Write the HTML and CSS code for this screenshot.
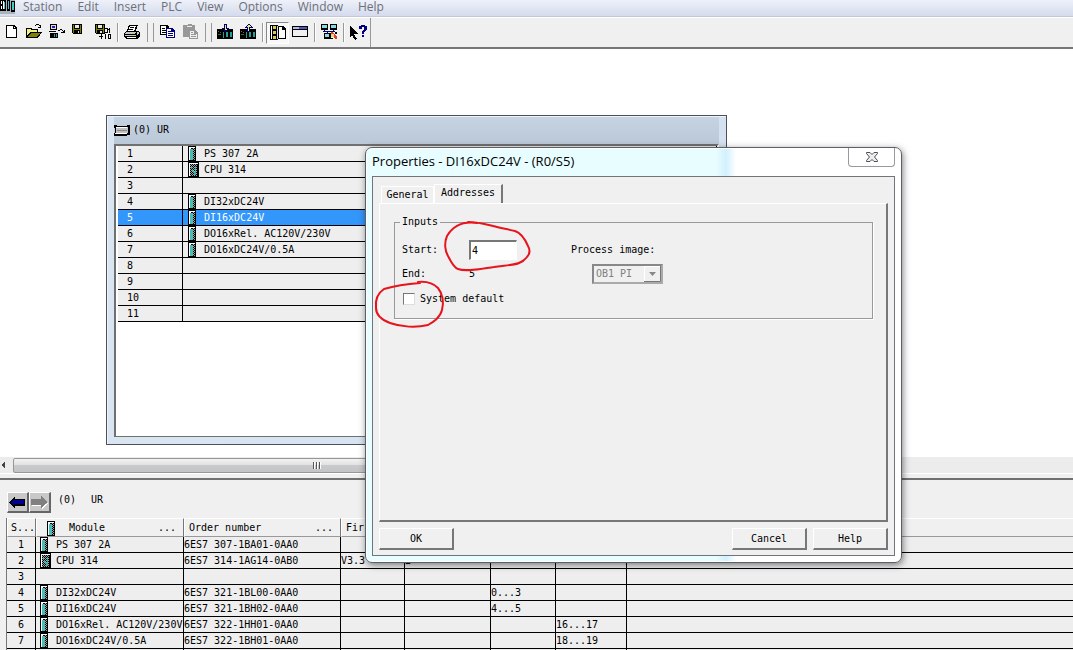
FILE: index.html
```html
<!DOCTYPE html>
<html lang="en">

<head>
    <meta charset="UTF-8">
    <meta name="viewport" content="width=device-width, initial-scale=1.0">
    <title>HW Config</title>
    <link rel="stylesheet" href="styles.css">
</head>

<body>
    <svg class="defs" width="0" height="0" aria-hidden="true">
        <defs>
            <pattern id="hatch" width="2" height="2" patternUnits="userSpaceOnUse">
                <path fill="#a0a8a8" d="M0 0h2v2h-2z" />
                <path d="M0 0h1v1h-1zM1 1h1v1h-1z" />
            </pattern>
            <symbol id="module" viewBox="0 0 11 15">
                <path d="M0 0h8v15h-8z" />
                <path fill="#fff" d="M1 1h6v1h-6zM1 1h2v13h-2z" />
                <path fill="#48bcb8" d="M2 3h3v11h-3z" />
                <path fill="url(#hatch)" d="M5 2h2v12h-2z" />
            </symbol>
            <symbol id="cpu" viewBox="0 0 11 15">
                <path d="M0 0h11v15h-11z" />
                <path fill="#fff" d="M1 1h9v1h-9zM1 1h1v13h-1z" />
                <path fill="url(#hatch)" d="M2 2h7v12h-7z" />
                <path fill="#30b0a8" d="M3 5h1v2h1v2h1v1h1v-6h1v9h-2v-2h-1v-2h-1v-2h-1z" />
            </symbol>
            <symbol id="rackmods" viewBox="0 0 17 17">
                <path d="M0 5h16v10h-16z" />
                <path fill="#20a098" d="M6 8h1v6h-1zM9 8h2v5h-2zM13 8h2v5h-2z" />
                <path fill="#d03030" d="M1 7h1v1h-1zM3 8h1v1h-1z" />
                <path fill="#208020" d="M1 10h3v1h-3z" />
            </symbol>
        </defs>
    </svg>

    <div class="app">
        <nav class="menu">
            <svg class="logo" width="15" height="14" viewBox="0 0 15 14">
                <path fill="#a8b4bc" d="M0 0h15v14h-15z" />
                <path d="M0 0h6v11h-6zM7 0h3v11h-3zM11 1h4v11h-4z" />
                <path fill="#fff" d="M1 1h1v3h-1zM1 6h1v3h-1zM3 1h1v8h-1z" />
                <path fill="#48c8c8" d="M4 2h1v7h-1zM8 1h1v8h-1zM12 2h2v8h-2z" />
            </svg>
            <button>Station</button>
            <button>Edit</button>
            <button>Insert</button>
            <button>PLC</button>
            <button>View</button>
            <button>Options</button>
            <button>Window</button>
            <button>Help</button>
        </nav>

        <div class="toolbar">
            <div class="tools">
                <button aria-label="New">
                    <svg viewBox="0 0 17 17"><path d="M3 1h8l3 3v10h-11z" /><path fill="#fff" d="M4 2h6v3h3v8h-9zM11 3h1v1h-1z" /></svg>
                </button>
                <button aria-label="Open">
                    <svg viewBox="0 0 17 17"><path d="M0 4h5l1 1h6v3h4l-4 6h-12z" /><path fill="#f0f080" d="M1 5h3l1 1h6v2h-7l-3 4z" /><path fill="#808000" d="M5 9h9l-3 4h-9z" /><path fill="none" stroke="#000" d="M9 1.500h1M10 .5h3M13 1.500h1M14.500 1v3M12 3.500h3" /></svg>
                </button>
                <button aria-label="Open online">
                    <svg viewBox="0 0 17 17"><path d="M1 0h7v6h-7zM0 7h7v1h-7zM1 9h8v5h-8z" /><path fill="#ddd" d="M2 1h5v4h-5z" /><path fill="#2020c0" d="M3 2h3v2h-3z" /><path fill="#30a8a0" d="M5 10h1v3h-1zM7 10h1v3h-1z" /><path fill="none" stroke="#000" d="M9 6.500h2M11 5.500h2M13 6.500h1M14 7.500h1M15.500 6v3M12 8.500h4" /></svg>
                </button>
                <button aria-label="Save">
                    <svg viewBox="0 0 17 17"><path d="M0 0h10v10h-9l-1-1z" /><path fill="#808000" d="M1 1h1v4h6v-4h1v8h-8z" /><path fill="#e8e8e8" d="M3 1h4v3h-4z" /><path d="M2 6h6v3h-6z" /><path fill="#ddd" d="M6 7h1v2h-1z" /></svg>
                </button>
                <button aria-label="Save and compile">
                    <svg viewBox="0 0 17 17"><path d="M0 0h10v10h-9l-1-1z" /><path fill="#808000" d="M1 1h1v4h6v-4h1v8h-8z" /><path fill="#e8e8e8" d="M3 1h4v3h-4z" /><path d="M2 6h6v3h-6z" /><path fill="#ddd" d="M5 7h2v2h-2z" /><path fill="none" stroke="#000" d="M9.500 4.500h3v4h-3zM14.500 4v5M13 5.500h1M10.500 10v5M13.500 10.500h2v4h-2zM4 12.500h4M6.500 10v5" /></svg>
                </button>
                <i class="sep"></i>
                <button aria-label="Print">
                    <svg viewBox="0 0 17 17"><path d="M5 1h9l-2 6h3l1 2v3l-3 3h-11l-2-2v-4l3-3z" /><path fill="#fff" d="M6 2h6l-2 5h-6z" /><path stroke="#000" d="M6 3.500h4M5 5.500h4" /><path fill="#c8c8c8" d="M2 8h10l-1 2h-10zM1 11h11v1h-11zM13 8h2v1l-1 2h-1z" /><path fill="#fff" d="M3 13h9v1h-9z" /><path fill="#d8d830" d="M8 11h3v1h-3z" /></svg>
                </button>
                <i class="sep wide"></i>
                <button aria-label="Copy">
                    <svg viewBox="0 0 17 17"><path d="M1 1h7l2 2v8h-9z" /><path fill="#fff" d="M2 2h5v2h2v6h-7z" /><path stroke="#000" d="M3 4.500h3M3 6.500h5M3 8.500h5" /><path fill="#000080" d="M7 4h6l3 3v7h-9z" /><path fill="#fff" d="M8 5h4v3h3v5h-7z" /><path stroke="#000080" d="M9 7.500h3M9 9.500h5M9 11.500h5" /></svg>
                </button>
                <button aria-label="Paste" disabled>
                    <svg viewBox="0 0 17 17"><path fill="#989898" d="M1 1h4l1-1h3l1 1h3v12h-12z" /><path fill="#eee" d="M5 2h5v1h-5z" /><path fill="#989898" d="M7 6h6l3 3v6h-9z" /><path fill="#eee" d="M8 7h4v3h3v4h-7z" /><path stroke="#989898" d="M9 8.500h2M9 10.500h5M9 12.500h5" /></svg>
                </button>
                <i class="sep wide"></i>
                <button aria-label="Download">
                    <svg viewBox="0 0 17 17"><use href="#rackmods" width="17" height="17" /><path fill="#000080" d="M7 0h3v4h2l-3 4h-1l-3-4h2z" /><path fill="#f0f060" d="M8 1h1v4h1l-1 1h-1l-1-1h1z" /></svg>
                </button>
                <button aria-label="Upload">
                    <svg viewBox="0 0 17 17"><use href="#rackmods" width="17" height="17" /><path fill="#000080" d="M8 0h1l4 4h-3v4h-3v-4h-3z" /><path fill="#f0f060" d="M8 1h1l2 2h-2v4h-1v-4h-2z" /></svg>
                </button>
                <i class="sep"></i>
                <button class="pressed" aria-label="Catalog">
                    <svg viewBox="0 0 17 17"><path d="M1 1h8v15h-8zM9 2h5l3 3v10h-8z" /><path fill="#fff" d="M2 2h1v13h-1zM10 3h3v3h3v8h-6z" /><path fill="#d8c850" d="M4 2h3v3h-3zM4 7h3v3h-3zM4 12h3v3h-3z" /><path fill="#ddd" d="M8 2h1v13h-1z" /></svg>
                </button>
                <button aria-label="Station window">
                    <svg viewBox="0 0 17 17"><path d="M0 2h16v11h-16z" /><path fill="#f0f0f0" d="M1 6h14v6h-14z" /><path fill="#5058b8" d="M1 3h14v2h-14z" /><path fill="#b8b8e8" d="M1 3h6v2h-6z" /></svg>
                </button>
                <i class="sep"></i>
                <button aria-label="Network">
                    <svg viewBox="0 0 17 17"><path d="M0 0h7v6h-7zM9 0h7v6h-7zM3 9h7v6h-7z" /><path fill="#88dcdc" d="M1 1h5v3h-5zM10 1h5v3h-5zM4 10h4v3h-4z" /><path stroke="#000080" d="M2 7.500h12M3.500 6v2M12.500 6v2M6.500 8v2" /><path fill="#d84020" d="M10 8h2l4 5v2h-2l-4-4z" /><path fill="#f0d080" d="M10 10h3v3h-3z" /><path d="M14 8h2v2h-2zM9 14h3v1h-3z" /></svg>
                </button>
                <i class="sep"></i>
                <button aria-label="Help pointer">
                    <svg viewBox="0 0 17 17"><path d="M0 2l8 8h-4l3 5-2 1-3-5-2 2z" /><path fill="#000080" d="M9 2h2v-1h4v1h2v4h-1v1h-1v1h-1v2h-2v-3h1v-1h1v-3h-2v2h-3zM12 11h2v2h-2z" /></svg>
                </button>
            </div>
        </div>

        <main class="desk">
            <section class="rack">
                <header class="racktitle">
                    <svg width="16" height="11" viewBox="0 0 16 11">
                        <path d="M0 0h3v1h10v-1h3v10h-3v1h-13v-3h1v-5h-1z" />
                        <path fill="#c0c0c0" d="M2 2h12v6h-12z" /><path fill="#fff" d="M2 2h11v1h-11zM1 8h12v1h-12z" /><path fill="#888" d="M3 5h10v1h-10z" />
                    </svg>
                    <span>(0) UR</span>
                </header>
                <div class="rackbody">
                    <table class="slots">
                        <tr><td>1</td><td><svg class="mod"><use href="#module" /></svg>PS 307 2A</td></tr>
                        <tr><td>2</td><td><svg class="mod"><use href="#cpu" /></svg>CPU 314</td></tr>
                        <tr><td>3</td><td></td></tr>
                        <tr><td>4</td><td><svg class="mod"><use href="#module" /></svg>DI32xDC24V</td></tr>
                        <tr class="on"><td>5</td><td><svg class="mod"><use href="#module" /></svg>DI16xDC24V</td></tr>
                        <tr><td>6</td><td><svg class="mod"><use href="#module" /></svg>DO16xRel. AC120V/230V</td></tr>
                        <tr><td>7</td><td><svg class="mod"><use href="#module" /></svg>DO16xDC24V/0.5A</td></tr>
                        <tr><td>8</td><td></td></tr>
                        <tr><td>9</td><td></td></tr>
                        <tr><td>10</td><td></td></tr>
                        <tr><td>11</td><td></td></tr>
                    </table>
                </div>
            </section>
        </main>

        <div class="scroll">
            <svg width="8" height="8" viewBox="0 0 8 8"><path fill="#444" d="M5 0v8l-4-4z" /></svg>
            <div class="thumb"><i></i><i></i><i></i></div>
        </div>

        <section class="detail">
            <div class="nav">
                <button aria-label="Back">
                    <svg viewBox="0 0 17 13"><path d="M0 6l6-6v3h10v7h-10v3z" /><path fill="#000090" d="M2 6l3-3v1h10v4h-10v2z" /></svg>
                </button>
                <button aria-label="Forward" disabled>
                    <svg viewBox="0 0 17 13"><path fill="#fff" d="M17 7l-6 6v-3h-10v-1h11z" /><path fill="#808080" d="M16 6l-6-6v3h-10v6h10v3z" /></svg>
                </button>
                <span>(0)</span>
                <span>UR</span>
            </div>
            <table class="modules">
                <colgroup>
                    <col class="c-slot"><col class="c-module"><col class="c-order"><col class="c-firm">
                    <col class="c-mpi"><col class="c-in"><col class="c-out"><col>
                </colgroup>
                <tr>
                    <th>S...</th>
                    <th><div class="head"><svg class="mod"><use href="#module" /></svg><span>Module</span><span class="dots">...</span></div></th>
                    <th><div class="head"><span>Order number</span><span class="dots">...</span></div></th>
                    <th>Fir</th><th></th><th></th><th></th><th></th>
                </tr>
                <tr><td>1</td><td><svg class="mod"><use href="#module" /></svg>PS 307 2A</td><td>6ES7 307-1BA01-0AA0</td><td></td><td></td><td></td><td></td><td></td></tr>
                <tr><td>2</td><td><svg class="mod"><use href="#cpu" /></svg>CPU 314</td><td>6ES7 314-1AG14-0AB0</td><td>V3.3</td><td>2</td><td></td><td></td><td></td></tr>
                <tr><td>3</td><td></td><td></td><td></td><td></td><td></td><td></td><td></td></tr>
                <tr><td>4</td><td><svg class="mod"><use href="#module" /></svg>DI32xDC24V</td><td>6ES7 321-1BL00-0AA0</td><td></td><td></td><td>0...3</td><td></td><td></td></tr>
                <tr><td>5</td><td><svg class="mod"><use href="#module" /></svg>DI16xDC24V</td><td>6ES7 321-1BH02-0AA0</td><td></td><td></td><td>4...5</td><td></td><td></td></tr>
                <tr><td>6</td><td><svg class="mod"><use href="#module" /></svg>DO16xRel. AC120V/230V</td><td>6ES7 322-1HH01-0AA0</td><td></td><td></td><td></td><td>16...17</td><td></td></tr>
                <tr><td>7</td><td><svg class="mod"><use href="#module" /></svg>DO16xDC24V/0.5A</td><td>6ES7 322-1BH01-0AA0</td><td></td><td></td><td></td><td>18...19</td><td></td></tr>
                <tr><td></td><td></td><td></td><td></td><td></td><td></td><td></td><td></td></tr>
            </table>
        </section>
    </div>

    <div class="dialog" role="dialog" aria-labelledby="dlgtitle">
        <header class="dlghead">
            <span id="dlgtitle">Properties - DI16xDC24V - (R0/S5)</span>
            <button class="close" aria-label="Close">
                <svg width="12" height="10" viewBox="0 0 12 10"><path fill="#eee" stroke="#4a4e58" d="M.5.5h3.500l2 2 2-2h3.500v1l-3 3.500 3 3.500v1h-3.500l-2-2-2 2h-3.500v-1l3-3.500-3-3.500z" /></svg>
            </button>
        </header>
        <div class="client">
            <div class="tabs">
                <button>General</button>
                <button class="on">Addresses</button>
            </div>
            <div class="panel">
                <fieldset>
                    <legend>Inputs</legend>
                    <div class="fields">
                        <label for="start">Start:</label>
                        <input type="text" id="start" value="4">
                        <label for="image">Process image:</label>
                        <span>End:</span>
                        <span class="end">5</span>
                        <select id="image" disabled>
                            <option>OB1 PI</option>
                        </select>
                    </div>
                    <div class="check">
                        <input type="checkbox" id="sysdef">
                        <label for="sysdef">System default</label>
                    </div>
                </fieldset>
            </div>
            <div class="actions">
                <button class="ok">OK</button>
                <button>Cancel</button>
                <button>Help</button>
            </div>
        </div>
        <svg class="marks" width="170" height="190" viewBox="366 148 170 190" aria-hidden="true">
            <path d="M477 223C463 221 453 226 447 236C444 243 445 251 448 256C451 262 454 268 458 269C466 272 480 269 494 267C505 265 518 266 524 260C529 256 531 251 528 246C525 239 521 233 515 231C507 229 500 228 493 226C485 224 478 222 468 222" />
            <path d="M418 282C427 281 433 283 438 288C443 294 444 303 442 310C440 318 433 322 428 325C416 328 401 327 390 323C382 320 376 316 376 308C375 299 378 293 384 289C394 286 406 284 420 283" />
        </svg>
    </div>
</body>

</html>
```
FILE: styles.css
```css
* {
    box-sizing: border-box;
}

html,
body {
    height: 100%;
    margin: 0;
    overflow: hidden;
}

body {
    position: relative;
    background: #f0f0f0;
    color: #000;
    font: 10px/14px "DejaVu Sans Mono", "Liberation Mono", monospace;
}

button,
input,
select {
    margin: 0;
    padding: 0;
    border: 0;
    border-radius: 0;
    background: none;
    color: inherit;
    font: inherit;
}

svg {
    flex: none;
    shape-rendering: crispEdges;
}

table {
    border-collapse: separate;
    border-spacing: 0;
    table-layout: fixed;
    width: 100%;
}

.defs {
    position: absolute;
}

.app {
    display: flex;
    flex-direction: column;
    height: 100%;
}

/* menu */
.menu {
    display: flex;
    flex: none;
    gap: 15px;
    height: 17px;
    background: linear-gradient(#eef1f9, #d5dbed);
    border-bottom: 1px solid #c3c8d6;
}

.menu .logo {
    margin-right: -7px;
}

.menu button {
    height: 14px;
    color: #6d7078;
    font: 12px/14px "Open Sans", "Noto Sans", sans-serif;
}

/* toolbar */
.toolbar {
    flex: none;
    height: 32px;
    border-top: 1px solid #fff;
    border-bottom: 2px solid #777;
    background: #f0f0f0;
}

.tools {
    display: flex;
    align-items: center;
    width: max-content;
    height: 100%;
    border-right: 1px solid #999;
}

.tools button {
    display: flex;
    align-items: center;
    justify-content: center;
    width: 23px;
    height: 22px;
}

.tools button svg {
    width: 17px;
    height: 17px;
}

.tools .pressed {
    border: 1px solid #888;
    border-right-color: #fff;
    border-bottom-color: #fff;
    background: #f8f8f8;
}

.sep {
    width: 2px;
    height: 19px;
    margin: 0 2px;
    border-left: 1px solid #999;
    border-right: 1px solid #fff;
}

.sep.wide {
    width: 7px;
    margin: 0 2px 0 3px;
    border-right-color: #999;
}

/* station area */
.desk {
    position: relative;
    flex: 1;
    min-height: 0;
    overflow: hidden;
    background: #fff;
}

.rack {
    position: absolute;
    left: 106px;
    top: 66px;
    display: flex;
    flex-direction: column;
    width: 621px;
    height: 330px;
    padding: 0 7px 7px;
    border: 1px solid #4c5058;
    background: linear-gradient(90deg, #dae5f2, #d4e1f0);
    box-shadow: inset 1px 1px #eef4fa;
}

.racktitle {
    display: flex;
    align-items: center;
    gap: 3px;
    height: 27px;
    margin-top: 1px;
    background: linear-gradient(#c6d3e2, #bac8d7);
}

.racktitle span {
    padding-bottom: 1px;
}

.rackbody {
    flex: 1;
    border: 2px solid #707070;
    border-right-color: #fff;
    border-bottom: 1px solid #707070;
    padding-left: 2px;
    background: #fff;
}

.slots td,
.modules td {
    height: 16px;
    padding: 0;
    border-right: 1px solid #000;
    border-bottom: 1px solid #000;
    background: #eee;
    line-height: 15px;
    white-space: nowrap;
}

.slots td:first-child {
    width: 65px;
    padding-left: 9px;
}

.mod {
    width: 11px;
    height: 15px;
    margin: 0 5px 0 4px;
    vertical-align: top;
}

.slots .mod {
    margin-left: 5px;
}

.slots .on td {
    background: #3296fa;
    color: #fff;
}

/* horizontal scrollbar */
.scroll {
    display: flex;
    flex: none;
    align-items: center;
    gap: 5px;
    height: 17px;
    border-bottom: 1px solid #fff;
    background: #ececec;
}

.thumb {
    display: flex;
    align-items: center;
    justify-content: center;
    gap: 1px;
    width: 607px;
    height: 15px;
    border: 1px solid #979797;
    border-radius: 2px;
    background: linear-gradient(#f2f2f2, #e2e2e4 45%, #c9cacc 50%, #c3c4c6);
}

.thumb i {
    width: 2px;
    height: 7px;
    border-left: 1px solid #555;
    border-right: 1px solid #fff;
}

/* module list */
.detail {
    flex: none;
    height: 172px;
    margin-top: 4px;
    padding: 12px 0 0 6px;
    overflow: hidden;
    border-top: 2px solid #707070;
    background: #f0f0f0;
}

.nav {
    display: flex;
    align-items: flex-start;
    height: 26px;
    padding-left: 1px;
}

.nav button {
    display: flex;
    align-items: center;
    justify-content: center;
    width: 22px;
    height: 21px;
    border: 1px solid #fff;
    border-right: 2px solid #666;
    border-bottom: 2px solid #666;
    background: #c8c8c8;
}

.nav button svg {
    width: 17px;
    height: 13px;
}

.nav span {
    margin: 1px 0 0 7px;
}

.nav span + span {
    margin-left: 15px;
}

.modules {
    border-left: 1px solid #777;
}

.c-slot {
    width: 29px;
}

.c-module {
    width: 148px;
}

.c-order {
    width: 157px;
}

.c-firm {
    width: 64px;
}

.c-mpi {
    width: 86px;
}

.c-in {
    width: 65px;
}

.c-out {
    width: 71px;
}

.modules th {
    height: 19px;
    padding: 1px 0 0 4px;
    border-top: 1px solid #fff;
    border-left: 1px solid #fff;
    border-right: 1px solid #777;
    border-bottom: 1px solid #999;
    font-weight: normal;
    text-align: left;
}

.modules th:first-child {
    padding-left: 3px;
}

.modules th:nth-child(n+5) {
    border-left: 0;
}

.modules th:last-child {
    border-right: 0;
}

.modules td:first-child {
    text-align: center;
}

.modules td:last-child {
    border-right: 0;
}

.head {
    display: flex;
    align-items: center;
}

.head .mod {
    margin: 0 11px 0 6px;
}

.head .dots {
    margin: 0 7px 0 auto;
}

/* properties dialog */
.dialog {
    position: absolute;
    left: 365px;
    top: 147px;
    display: flex;
    flex-direction: column;
    width: 537px;
    height: 416px;
    padding: 0 6px 6px;
    border: 1px solid #5b6066;
    border-radius: 7px;
    background: linear-gradient(90deg, #e8fdff 350px, #d2f0ff 360px, #fff 370px);
    box-shadow: 1px 2px 7px rgba(0, 0, 0, .5), inset 0 0 0 1px #fff;
}

.dlghead {
    display: flex;
    align-items: flex-start;
    justify-content: space-between;
    height: 28px;
    font: 13px/27px "Open Sans", "Noto Sans", sans-serif;
}

.close {
    display: flex;
    align-items: center;
    justify-content: center;
    width: 47px;
    height: 19px;
    border: 1px solid #999;
    border-top: 0;
    border-radius: 0 0 4px 4px;
    background: #fff;
}

.close svg {
    shape-rendering: auto;
}

.client {
    display: flex;
    flex: 1;
    flex-direction: column;
    padding: 7px 6px 5px;
    border: 1px solid #70757a;
    background: #f0f0f0;
}

.tabs {
    display: flex;
    align-items: flex-end;
    height: 19px;
    padding-left: 2px;
}

.tabs button {
    width: 53px;
    height: 17px;
    border: 1px solid #fff;
    border-bottom: 0;
}

.tabs .on {
    width: 69px;
    height: 19px;
    padding-bottom: 2px;
    border-right: 2px solid #777;
}

.panel {
    flex: 1;
    padding: 11px 13px 11px 14px;
    border: 1px solid #fff;
    border-right: 2px solid #777;
    border-bottom: 2px solid #777;
}

fieldset {
    height: 104px;
    margin: 0;
    padding: 11px 7px 0;
    border: 1px solid #999;
    box-shadow: 1px 1px #fff;
}

legend {
    padding: 0 2px;
    margin-left: -2px;
}

.fields {
    display: grid;
    grid-template-columns: 67px 102px 1fr;
    grid-auto-rows: 20px;
    row-gap: 4px;
    align-items: center;
}

.fields input {
    width: 48px;
    height: 20px;
    padding-left: 1px;
    border: 2px solid #777;
    border-right: 1px solid #fff;
    border-bottom: 1px solid #fff;
    background: #fff;
}

.fields select {
    width: 71px;
    height: 20px;
    margin-left: 21px;
    padding-left: 2px;
    border: 2px solid #888;
    border-right-color: #aaa;
    border-bottom-color: #aaa;
    appearance: none;
    opacity: 1;
    color: #808080;
    background: #f0f0f0 url("data:image/svg+xml,%3Csvg xmlns='http://www.w3.org/2000/svg' width='17' height='16'%3E%3Cpath fill='none' stroke='%23fff' d='M.5 16V.5H17'/%3E%3Cpath fill='none' stroke='%23777' d='M16.500 0v15.500H0'/%3E%3Cpath fill='%23888' d='M5 6h7l-3.500 4z'/%3E%3C/svg%3E") right center no-repeat;
}

.check {
    display: flex;
    align-items: center;
    gap: 5px;
    height: 14px;
    margin-top: 8px;
}

.check input {
    width: 12px;
    height: 12px;
    margin-left: 1px;
    border: 1px solid #777;
    border-right-color: #ddd;
    border-bottom-color: #ddd;
    appearance: none;
    background: #fff;
}

.actions {
    display: flex;
    gap: 6px;
    margin-top: 6px;
}

.actions button {
    width: 75px;
    height: 22px;
    border: 1px solid #fff;
    border-right: 2px solid #777;
    border-bottom: 2px solid #777;
}

.actions .ok {
    margin-right: auto;
}

/* red pen circles */
.marks {
    position: absolute;
    left: 0;
    top: 0;
    fill: none;
    stroke: #e8141c;
    stroke-width: 2;
    stroke-linecap: round;
    shape-rendering: auto;
    pointer-events: none;
}
```
